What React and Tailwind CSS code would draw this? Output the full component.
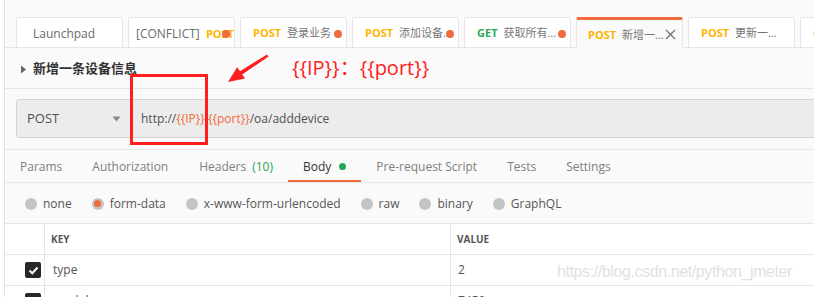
import React from 'react';

const Dot = () => (
  <span className="absolute right-[4px] top-[12px] w-[8px] h-[8px] rounded-full bg-[#f26b3a]"></span>
);

const RequestTab = ({ method, name, pl, dot, active, close, cjk }) => {
  const methodColor = method === 'GET' ? 'text-[#2aa853]' : 'text-[#ffb400]';
  return (
    <div
      className={`relative shrink-0 w-[107px] h-[30px] flex items-center pt-[2px] overflow-hidden whitespace-nowrap border border-b-0 rounded-t-[2px] ${
        active ? 'bg-[#fafafa] border-[#e6e6e6] border-t-[3px] border-t-[#f26b3a] h-[31px] -mb-px' : 'bg-white border-[#e6e6e6]'
      }`}
      style={{ paddingLeft: pl }}
    >
      {method && <span className={`text-[11px] font-bold ${methodColor} mr-[6px]`}>{method}</span>}
      <span className={cjk ? 'text-[11px] text-[#777]' : 'text-[12px] text-[#6b6b6b]'}>{name}</span>
      {dot && <Dot />}
      {close && (
        <svg className="absolute right-[6px] top-[9px]" width="11" height="11" viewBox="0 0 11 11">
          <path d="M1 1 L10 10 M10 1 L1 10" stroke="#777" strokeWidth="1.4" />
        </svg>
      )}
    </div>
  );
};

const Radio = ({ label, checked }) => (
  <div className="flex items-center gap-[6px]">
    <span className="w-[12px] h-[12px] rounded-full bg-[#c4c4c4] flex items-center justify-center">
      {checked && <span className="w-[7px] h-[7px] rounded-full bg-[#f26b3a]"></span>}
    </span>
    <span className="text-[12px] text-[#555]">{label}</span>
  </div>
);

const Check = () => (
  <span className="w-[16px] h-[16px] rounded-[2px] bg-[#282828] flex items-center justify-center">
    <svg width="11" height="9" viewBox="0 0 11 9">
      <path d="M1.5 4.5 L4.3 7.2 L9.5 1.5" stroke="#fff" strokeWidth="2" fill="none" />
    </svg>
  </span>
);

export default function App() {
  const tabs = ['Params', 'Authorization', 'Headers', 'Body', 'Pre-request Script', 'Tests', 'Settings'];

  return (
    <div className="relative w-[814px] h-[297px] overflow-hidden bg-[#fafafa] font-['Open_Sans','Noto_Sans_CJK_SC',sans-serif]">
      <div className="flex h-full">
        <div className="w-[5px] shrink-0 bg-white border-r border-[#e2e2e2]"></div>
        <div className="flex-1 min-w-0">
          {/* open request tabs */}
          <div className="flex items-end gap-[5px] pl-[11px] pt-[17px] border-b border-[#e6e6e6] h-[48px]">
            <RequestTab name="Launchpad" pl={16} />
            <RequestTab name={<span>[CONFLICT] <span className="text-[11px] font-bold text-[#ffb400] ml-[3px]">POST</span></span>} pl={7} dot />
            <RequestTab method="POST" name="登录业务" pl={12} dot cjk />
            <RequestTab method="POST" name="添加设备…" pl={12} dot cjk />
            <RequestTab method="GET" name="获取所有…" pl={12} dot cjk />
            <RequestTab method="POST" name="新增一…" pl={11} active close cjk />
            <RequestTab method="POST" name="更新一…" pl={12} cjk />
            <RequestTab method="GET" name="" pl={12} />
          </div>

          {/* request title */}
          <div className="h-[41px] flex items-center pt-[2px] pl-[15px] border-b border-[#e6e6e6]">
            <svg width="7" height="9" viewBox="0 0 7 9" className="mr-[6px]">
              <path d="M1 0.5 L6 4.5 L1 8.5 Z" fill="#666" />
            </svg>
            <span className="text-[13px] font-bold text-[#333]">新增一条设备信息</span>
          </div>

          {/* url bar */}
          <div className="h-[61px] pt-[10px] pl-[11px] border-b border-[#e6e6e6]">
            <div className="flex h-[39px] pt-[1px] -mr-[20px] bg-[#ececec] border border-[#d4d4d4] rounded-[3px]">
              <div className="w-[114px] shrink-0 flex items-center justify-between pl-[10px] pr-[10px]">
                <span className="text-[13px] text-[#505050]">POST</span>
                <svg width="9" height="6" viewBox="0 0 9 6">
                  <path d="M0.5 0.5 L8.5 0.5 L4.5 5.5 Z" fill="#888" />
                </svg>
              </div>
              <div className="flex items-center pl-[10px] text-[12px] text-[#505050] whitespace-nowrap">
                http://<span className="text-[#f26b3a]">{'{{IP}}'}</span>:<span className="text-[#f26b3a]">{'{{port}}'}</span>/oa/adddevice
              </div>
            </div>
          </div>

          {/* request section tabs */}
          <div className="flex h-[33px] border-b border-[#e6e6e6]">
            {tabs.map((t) => (
              <div
                key={t}
                className={`flex items-center px-[15px] pt-[3px] text-[12px] whitespace-nowrap border-b-2 ${
                  t === 'Body' ? 'text-[#333] border-[#f26b3a]' : 'text-[#808080] border-transparent'
                } ${t === 'Authorization' ? 'pr-[16px]' : ''}`}
              >
                {t}
                {t === 'Headers' && <span className="ml-[6px] text-[#26a65b]">(10)</span>}
                {t === 'Body' && <span className="ml-[8px] w-[7px] h-[7px] rounded-full bg-[#26a65b]"></span>}
              </div>
            ))}
          </div>

          {/* body type radios */}
          <div className="h-[40px] flex items-center pt-[1px] gap-[20px] pl-[20px]">
            <Radio label="none" />
            <Radio label="form-data" checked />
            <Radio label="x-www-form-urlencoded" />
            <Radio label="raw" />
            <Radio label="binary" />
            <Radio label="GraphQL" />
          </div>

          {/* form-data table */}
          <div className="bg-white border-t border-[#e6e6e6]">
            <div className="flex h-[31px] border-b border-[#e6e6e6]">
              <div className="w-[40px] shrink-0 border-r border-[#e6e6e6]"></div>
              <div className="w-[406px] shrink-0 border-r border-[#e6e6e6] flex items-center pl-[6px] text-[10px] font-bold text-[#555]">KEY</div>
              <div className="flex items-center pl-[6px] text-[10px] font-bold text-[#555]">VALUE</div>
            </div>
            <div className="flex h-[31px] border-b border-[#e6e6e6]">
              <div className="w-[40px] shrink-0 border-r border-[#e6e6e6] flex items-center pl-[20px]"><Check /></div>
              <div className="w-[406px] shrink-0 border-r border-[#e6e6e6] flex items-center pl-[8px] text-[12px] text-[#555]">type</div>
              <div className="flex items-center pl-[7px] text-[12px] text-[#555]">2</div>
            </div>
            <div className="flex h-[31px] border-b border-[#e6e6e6]">
              <div className="w-[40px] shrink-0 border-r border-[#e6e6e6] flex items-center pl-[20px]"><Check /></div>
              <div className="w-[406px] shrink-0 border-r border-[#e6e6e6] flex items-center pl-[8px] text-[12px] text-[#555]">model</div>
              <div className="flex items-center pl-[7px] text-[12px] text-[#555]">7450</div>
            </div>
          </div>
        </div>
      </div>

      {/* red annotation overlay */}
      <div className="absolute left-[130px] top-[74px] w-[78px] h-[71px] border-[3px] border-[#ff1e1e]"></div>
      <svg className="absolute left-[225px] top-[52px]" width="46" height="34" viewBox="0 0 46 34">
        <polygon points="3,30 12.1,15.2 15,19.3 42,2.5 43.5,4.5 17.2,22.5 20.1,26.6" fill="#ff1e1e" />
      </svg>
      <div className="absolute left-[292px] top-[55px] text-[20px] leading-[26px] text-[#ff2020] whitespace-nowrap">
        {'{{IP}}'}：{'{{port}}'}
      </div>

      {/* watermark */}
      <div className="absolute left-[557px] top-[261px] text-[16px] leading-[22px] tracking-[-0.4px] text-[#e2e2e2] font-['Liberation_Sans',sans-serif] whitespace-nowrap">
        https://blog.csdn.net/python_jmeter
      </div>
    </div>
  );
}
